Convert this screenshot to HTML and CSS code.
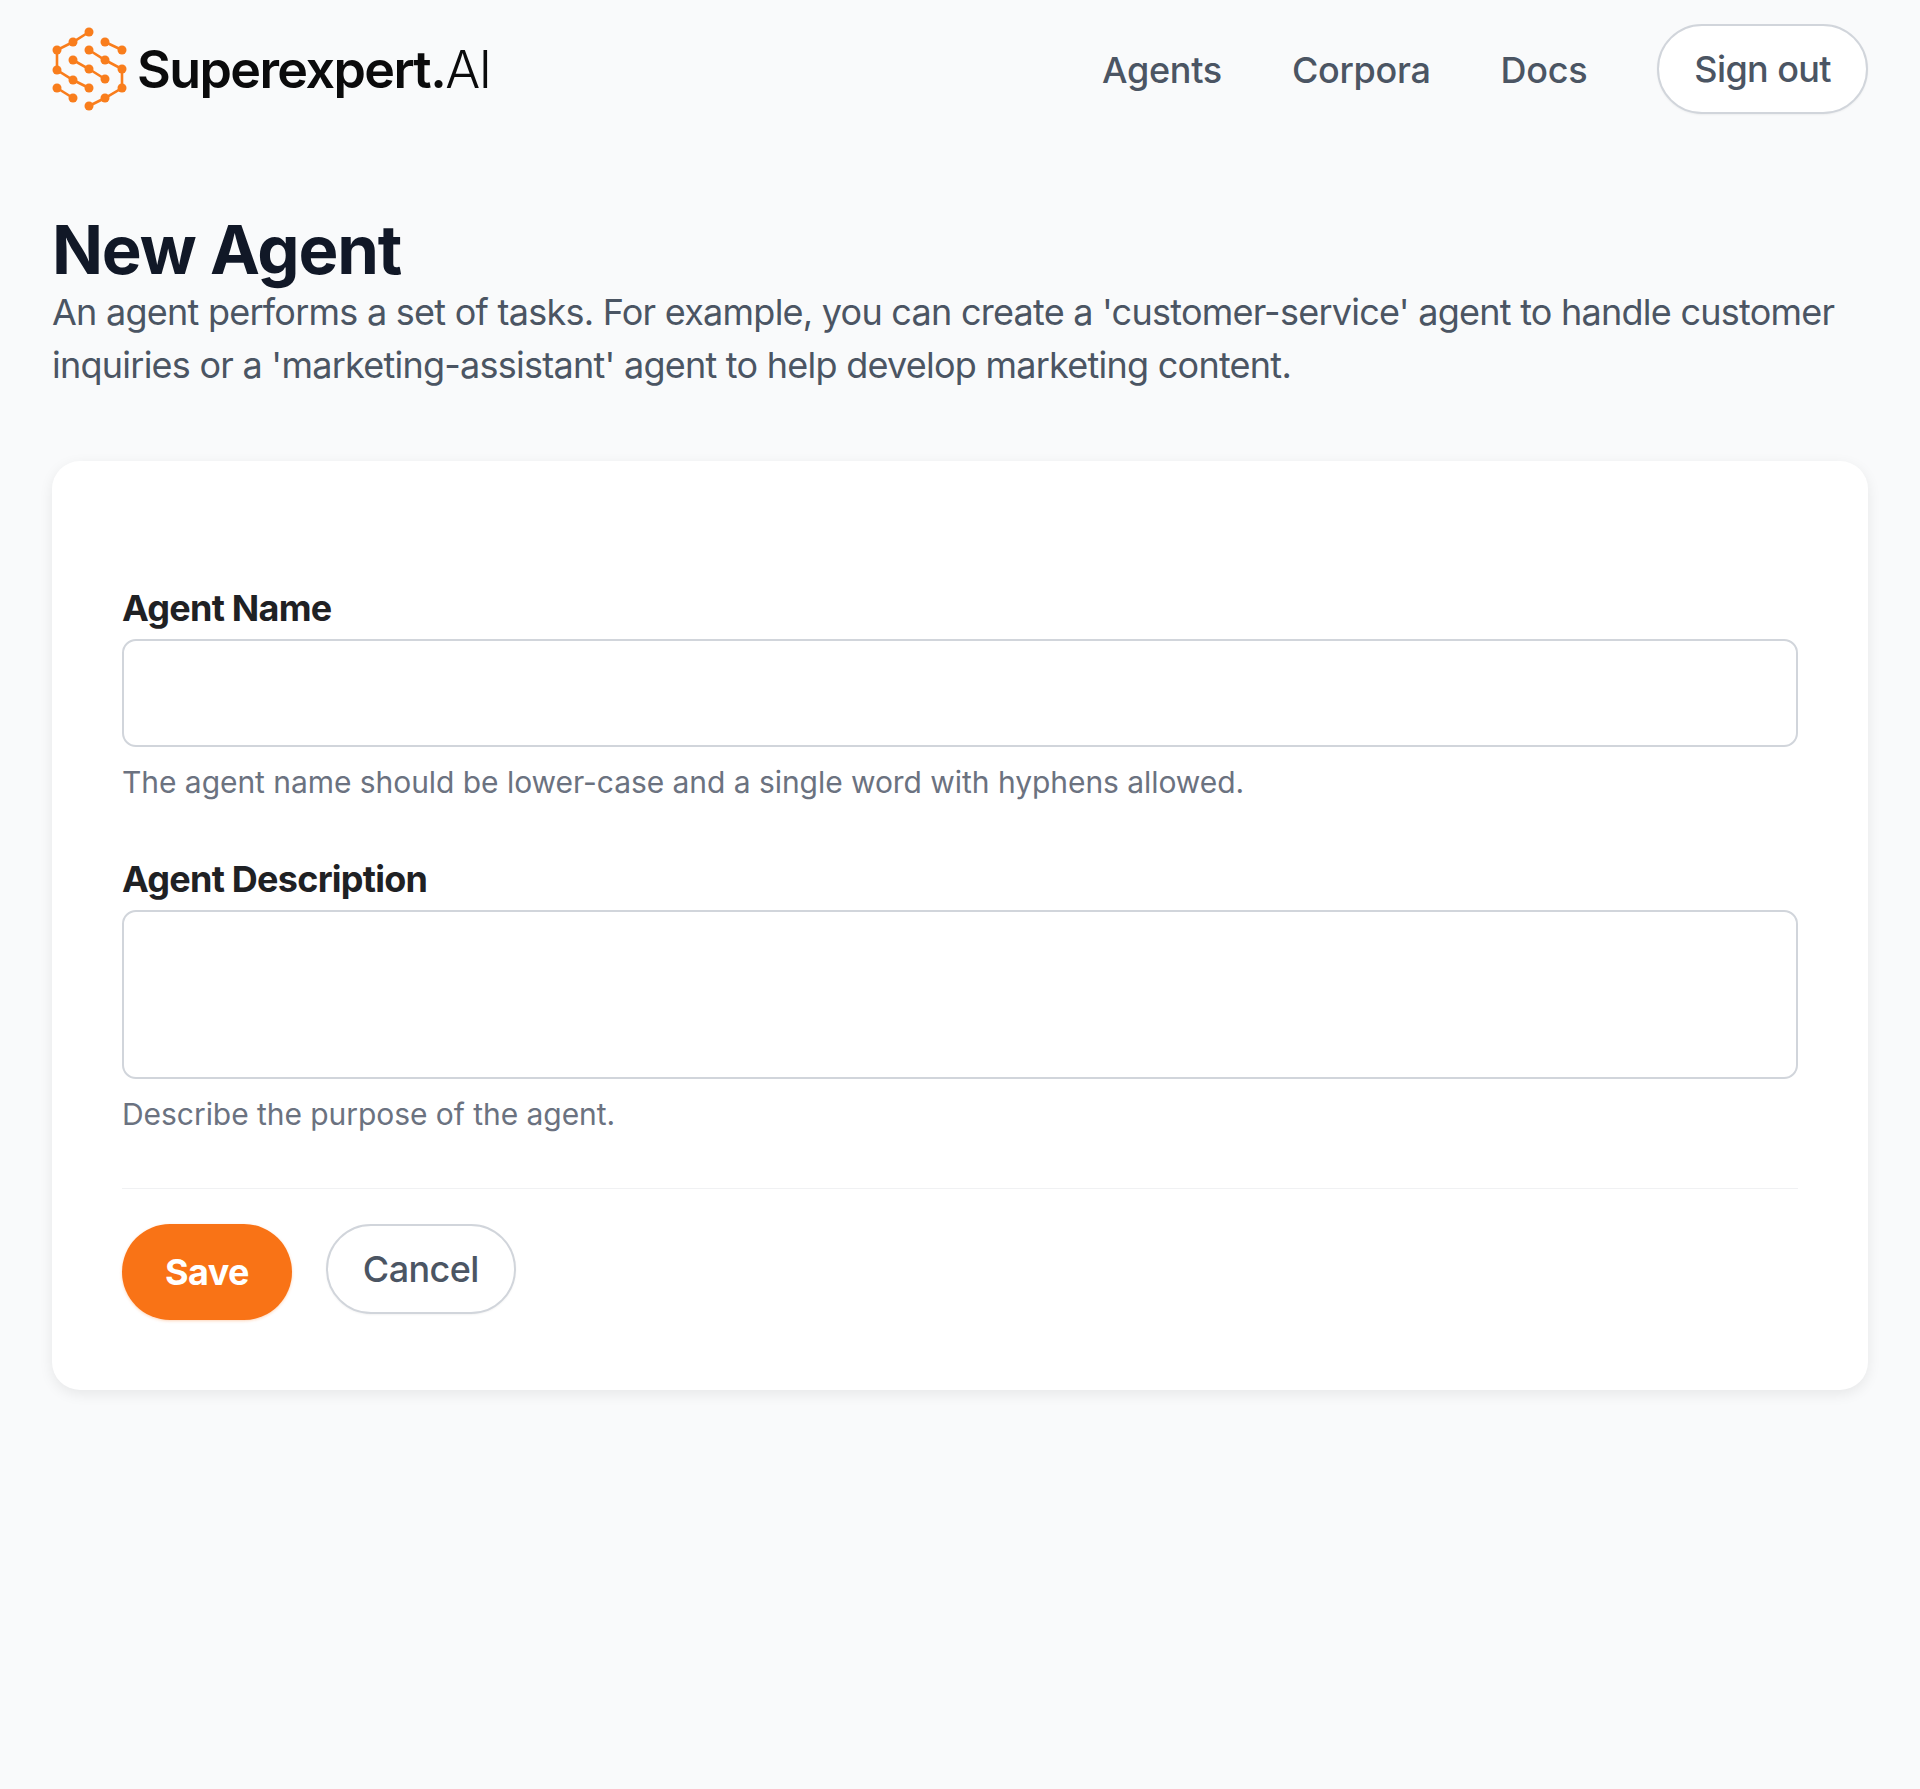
FILE: index.html
```html
<!DOCTYPE html>
<html lang="en">
<head>
    <meta charset="UTF-8">
    <meta name="viewport" content="width=device-width, initial-scale=1.0">
    <title>New Agent</title>
    <link rel="stylesheet" href="styles.css">
</head>
<body>

<!-- Header -->
<header class="header">
    <a class="brand" href="#">
        <svg class="logo" viewBox="0 0 100 100" aria-hidden="true">
            <g class="logo-lines">
                <polyline points="49,17 33,27 17,35 17,55 33,65 49,73"/>
                <polyline points="17,73 33,83"/>
                <polyline points="33,45 49,54 65,64"/>
                <polyline points="49,35 65,45 82,54 82,73 65,83 49,91"/>
                <polyline points="65,27 82,35"/>
            </g>
            <g class="logo-dots">
                <circle cx="49" cy="17" r="4.5"/><circle cx="33" cy="27" r="4.5"/><circle cx="17" cy="35" r="4.5"/>
                <circle cx="17" cy="55" r="4.5"/><circle cx="33" cy="65" r="4.5"/><circle cx="49" cy="73" r="4.5"/>
                <circle cx="17" cy="73" r="4.5"/><circle cx="33" cy="83" r="4.5"/>
                <circle cx="33" cy="45" r="4.5"/><circle cx="49" cy="54" r="4.5"/><circle cx="65" cy="64" r="4.5"/>
                <circle cx="49" cy="35" r="4.5"/><circle cx="65" cy="45" r="4.5"/><circle cx="82" cy="54" r="4.5"/>
                <circle cx="82" cy="73" r="4.5"/><circle cx="65" cy="83" r="4.5"/><circle cx="49" cy="91" r="4.5"/>
                <circle cx="65" cy="27" r="4.5"/><circle cx="82" cy="35" r="4.5"/>
            </g>
        </svg>
        <span class="brand-name">Superexpert.<span class="brand-ai">AI</span></span>
    </a>
    <nav class="nav">
        <a href="#" class="nav-link">Agents</a>
        <a href="#" class="nav-link">Corpora</a>
        <a href="#" class="nav-link">Docs</a>
        <button class="button button-outline">Sign out</button>
    </nav>
</header>

<main class="main">
    <h1 class="title">New Agent</h1>
    <p class="intro">An agent performs a set of tasks. For example, you can create a 'customer-service' agent to handle customer inquiries or a 'marketing-assistant' agent to help develop marketing content.</p>

    <form class="card">
        <div class="field">
            <label class="label" for="agentName">Agent Name</label>
            <input type="text" id="agentName" class="input">
            <p class="help">The agent name should be lower-case and a single word with hyphens allowed.</p>
        </div>
        <div class="field">
            <label class="label" for="agentDescription">Agent Description</label>
            <textarea id="agentDescription" class="input textarea"></textarea>
            <p class="help">Describe the purpose of the agent.</p>
        </div>
        <div class="actions">
            <button type="button" class="button button-primary">Save</button>
            <button type="button" class="button button-outline">Cancel</button>
        </div>
    </form>
</main>

</body>
</html>
```

FILE: styles.css
```css
* { box-sizing: border-box; }
body { margin: 0; min-height: 100vh; background-color: #f9fafb; font-family: Inter, "Liberation Sans", sans-serif; color: #4b5563; }

.header { display: flex; align-items: center; justify-content: space-between; padding: 24px 52px 0; height: 113px; }
.brand { display: flex; align-items: center; text-decoration: none; color: #0b0b0c; margin-left: -12px; }
.logo { width: 100px; height: 100px; flex: none; margin: 0 -3px 8px 0; }
.logo-lines { fill: none; stroke: #f97d1c; stroke-width: 2.6; }
.logo-dots { fill: #f97d1c; }
.brand-name { font-size: 52px; font-weight: 600; letter-spacing: -1.6px; line-height: 1; padding-top: 2px; }
.brand-ai { font-weight: 300; }
.nav { display: flex; align-items: center; gap: 70px; }
.nav-link { font-size: 36px; font-weight: 500; letter-spacing: -0.3px; color: #4b5563; text-decoration: none; padding-top: 2px; }

.button { font-family: inherit; font-size: 36px; letter-spacing: -0.6px; border-radius: 48px; cursor: pointer; }
.button-outline { height: 90px; padding: 0 35px; background-color: white; border: 2px solid #d1d5db; color: #4b5563; font-weight: 500; box-shadow: 0 1px 2px rgba(0, 0, 0, 0.05); }
.button-primary { height: 96px; padding: 0 43px; background-color: #f97316; border: none; color: white; font-weight: 700; box-shadow: 0 1px 3px rgba(249, 115, 22, 0.3); }

.main { padding: 0 52px; }
.title { margin: 100px 0 0; font-size: 67px; line-height: 73px; font-weight: 700; letter-spacing: -1.2px; color: #111827; }
.intro { margin: 0; font-size: 36px; line-height: 53px; letter-spacing: -0.75px; color: #4b5563; }

.card { margin-top: 69px; padding: 125px 70px 70px; background-color: white; border-radius: 28px; box-shadow: 0 4px 14px rgba(0, 0, 0, 0.08); }
.field { margin-bottom: 57px; }
.field + .field { margin-bottom: 56px; }
.label { display: block; font-size: 36px; line-height: 44px; font-weight: 700; letter-spacing: -0.75px; color: #1f2124; margin-bottom: 9px; }
.input { display: block; width: 100%; height: 108px; border: 2px solid #d1d5db; border-radius: 14px; background-color: white; font-family: inherit; font-size: 32px; padding: 10px 20px; resize: none; }
.textarea { height: 169px; }
.help { margin: 17px 0 0; font-size: 30px; line-height: 36px; letter-spacing: -0.05px; color: #6b7280; }
.actions { display: flex; align-items: flex-start; gap: 34px; padding-top: 35px; border-top: 1px solid #f0f1f3; }
```
